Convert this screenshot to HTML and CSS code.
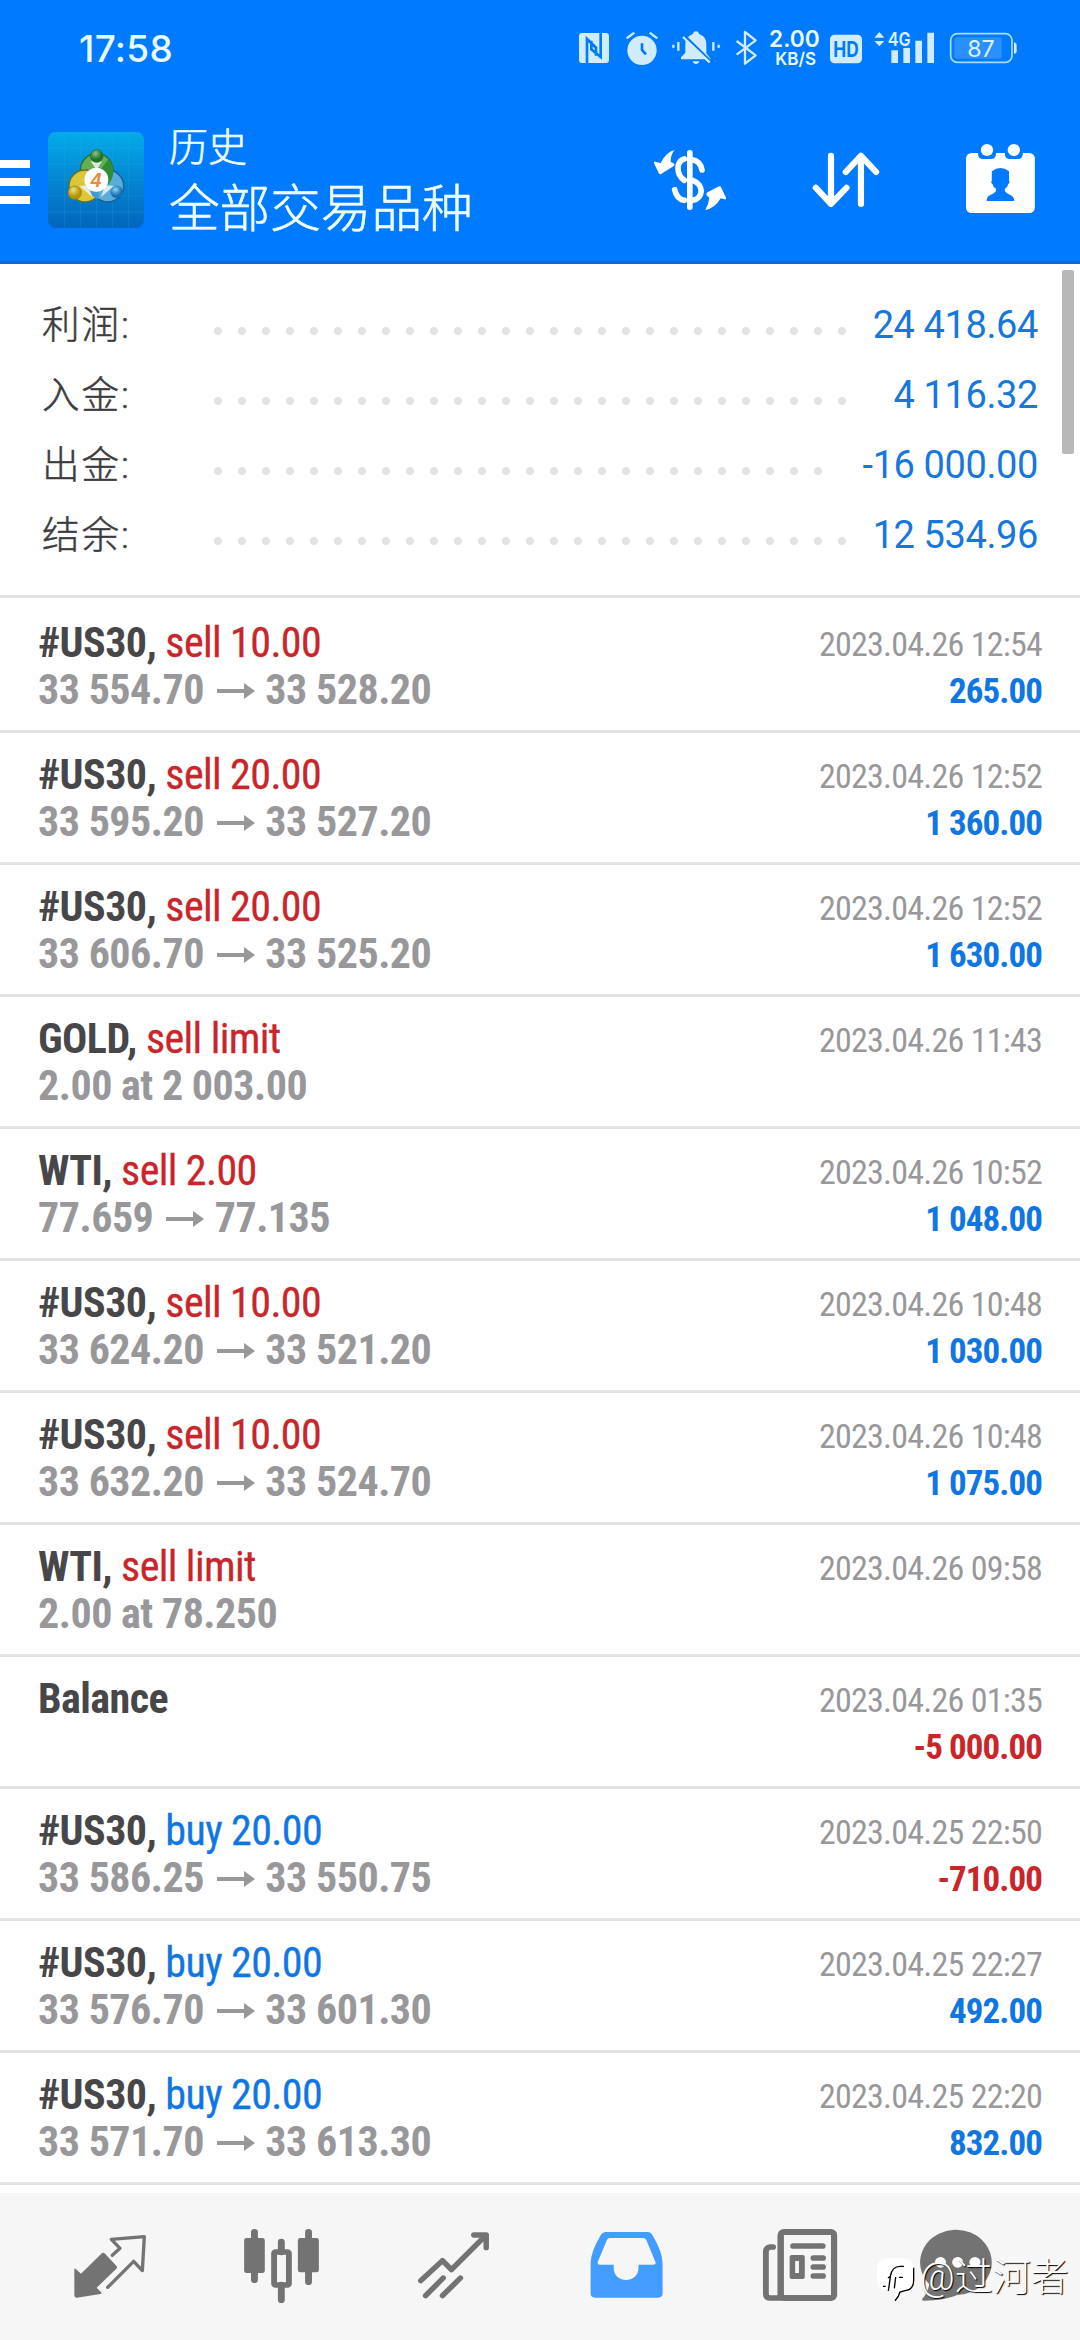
FILE: index.html
```html
<!DOCTYPE html>
<html lang="zh-CN">
<head>
<meta charset="utf-8">
<title>历史</title>
<link rel="stylesheet" href="styles.css">
</head>
<body>
<svg width="0" height="0" class="defs">
  <symbol id="arrow" viewBox="0 0 38 16"><path d="M0 6h27V0l11 8-11 8V10H0z"/></symbol>
</svg>
<div class="screen">
  <header class="header">
    <div class="statusbar">
      <time class="clock">17:58</time>
      <div class="status-icons">
        <svg width="44" height="60" viewBox="39 0 132 180"><rect x="57" y="39" width="90" height="90" rx="9"/><path class="cut" d="M81 129V57l27 26v24M122 39v72L94 88V62"/></svg>
        <svg width="48" height="60" viewBox="171 0 144 180"><circle cx="246" cy="91" r="44"/><path class="line6" d="M200 55l23-17M292 55l-23-17"/><path class="cut" d="M246 70v20l12 13"/></svg>
        <svg width="62" height="60" viewBox="315 0 186 180"><path d="M408 34c6 0 8 3 9 8 16 5 22 17 22 32v26l14 18h-90v-6l13-14V74c0-15 8-27 23-32 1-5 3-8 9-8zM398 124h20c-2 11-18 11-20 0z"/><path class="cut" d="M368 42l86 84"/><path class="line6" d="M369 51l80 76M355 66v26M340 74v9M460 66v26M476 74v9"/></svg>
        <svg width="38" height="60" viewBox="501 0 114 180"><path class="line6" d="M530 63l57 43-32 25V36l32 25-57 43"/></svg>
        <svg width="59" height="60" viewBox="615 0 177 180"><text class="st-bold" x="627" y="82" font-size="69" textLength="152" lengthAdjust="spacingAndGlyphs">2.00</text><text class="st-bold" x="646" y="136" font-size="53" textLength="122" lengthAdjust="spacingAndGlyphs">KB/S</text></svg>
        <svg width="46" height="60" viewBox="792 0 138 180"><rect x="810" y="44" width="96" height="86" rx="14"/><text class="st-cut" x="820" y="111" font-size="64" textLength="76" lengthAdjust="spacingAndGlyphs">HD</text></svg>
        <svg width="73" height="60" viewBox="930 0 219 180"><path d="M943 53l15-17 15 17zM943 63l15 16 15-16z"/><text class="st-med" x="983" y="78" font-size="58" textLength="69" lengthAdjust="spacingAndGlyphs">4G</text><path d="M994 91h20v38h-20zM1030 84h20v45h-20zM1066 62h20v67h-20zM1102 38h20v91h-20z"/></svg>
        <svg width="84" height="60" viewBox="1149 0 252 180"><rect class="line5" x="1172" y="41" width="184" height="86" rx="20"/><rect x="1183" y="52" width="142" height="64" rx="7" opacity=".2"/><path d="M1362 67q8 2 8 8v19q0 6-8 8z"/><text x="1222" y="112" font-size="70" textLength="82" lengthAdjust="spacingAndGlyphs">87</text></svg>
      </div>
    </div>
    <div class="appbar">
      <div class="menu"><i></i><i></i><i></i></div>
      <svg class="logo" viewBox="54 66 288 288">
        <defs>
          <linearGradient id="bg" x1="0" y1="0" x2="0" y2="1"><stop offset="0" stop-color="#04ace8"/><stop offset=".5" stop-color="#0486d2"/><stop offset="1" stop-color="#0365bd"/></linearGradient>
          <radialGradient id="gn" cx=".4" cy=".3"><stop offset="0" stop-color="#8cc47a"/><stop offset="1" stop-color="#1e742c"/></radialGradient>
          <radialGradient id="yl" cx=".4" cy=".3"><stop offset="0" stop-color="#efe07a"/><stop offset="1" stop-color="#b79408"/></radialGradient>
          <radialGradient id="bl" cx=".4" cy=".3"><stop offset="0" stop-color="#8fd0f2"/><stop offset="1" stop-color="#1672b8"/></radialGradient>
        </defs>
        <rect x="54" y="66" width="288" height="288" rx="24" fill="url(#bg)"/>
        <path d="M104 66v288M152 66v288M200 66v288M248 66v288M296 66v288M54 114h288M54 162h288M54 210h288M54 258h288M54 306h288" stroke="#3cb4ea" stroke-width="2" opacity=".3"/>
        <circle cx="200" cy="180" r="49" fill="#64ae55" stroke="#276d2e" stroke-width="4"/>
        <circle cx="165" cy="228" r="48" fill="#dcc63c" stroke="#5f7420" stroke-width="4"/>
        <circle cx="233" cy="228" r="48" fill="#57addc" stroke="#175f90" stroke-width="4"/>
        <path d="M236 146c20 22 18 56-2 78l-34-30z" fill="#2f8d38"/>
        <path d="M206 268c-24-8-38-28-40-48l40 6z" fill="#3f9ad2"/>
        <path d="M182 154l18 26 16-26zM148 228l26-2 14 36zM252 228l-26-2-14 36z" fill="#eef6ea" opacity=".85"/>
        <circle cx="200" cy="138" r="19" fill="url(#gn)" stroke="#276d2e" stroke-width="2"/>
        <circle cx="134" cy="248" r="20" fill="url(#yl)" stroke="#907808" stroke-width="2"/>
        <circle cx="260" cy="246" r="18" fill="url(#bl)" stroke="#175f90" stroke-width="1"/>
        <circle cx="199" cy="209" r="36" fill="#fff"/>
        <text class="logo-num" x="198" y="230" font-size="58" text-anchor="middle">4</text>
      </svg>
      <div class="titles">
        <div class="subtitle">历史</div>
        <div class="title">全部交易品种</div>
      </div>
      <div class="actions">
        <svg width="96" height="96" viewBox="6 6 288 288"><rect x="141" y="60" width="17" height="180" rx="8"/><path class="stroke" stroke-width="17" stroke-linecap="butt" d="M133 87Q114 92 114 115T133 151M158 89Q181 93 186 120M158 151C192 163 192 205 158 211M104 179Q110 208 133 211"/><path d="M104 60Q92 72 92 95l8 5q8 6-2 10l-35 22q-6 3-8-5L42 100q-2-8 6-4l14 3Q78 66 104 60zM196 240Q206 222 208 203l-7-6q-5-7 3-11l30-16q8-4 10 3l14 30q2 8-6 4l-10-2Q224 236 196 240z"/></svg>
        <svg width="96" height="96" viewBox="749.2 396 278.8 288" preserveAspectRatio="none"><path class="stroke" stroke-width="18" d="M845 467V611M801 563l44 49 45-49M932 612V468M888 516l44-49 44 49"/></svg>
        <svg width="96" height="96" viewBox="1196.4 396 278.8 288" preserveAspectRatio="none"><rect x="1237" y="459" width="200" height="180" rx="16"/><path class="blue" d="M1272 452h52v10q0 15-15 15h-22q-15 0-15-15zM1350 452h52v10q0 15-15 15h-22q-15 0-15-15z"/><circle cx="1298" cy="450" r="18"/><circle cx="1376" cy="450" r="18"/><path class="blue" d="M1312 514q25-20 50 0v28q4 4-2 10-2 10-10 14v8q5 6 16 11 11 5 11 18h-80q0-13 11-18 11-5 16-11v-8q-8-4-10-14-6-6-2-10z"/></svg>
      </div>
    </div>
  </header>

  <main class="content">
    <section class="summary">
      <div class="sum-row"><span class="sum-label">利润:</span><span class="dots"></span><span class="sum-value">24 418.64</span></div>
      <div class="sum-row"><span class="sum-label">入金:</span><span class="dots"></span><span class="sum-value">4 116.32</span></div>
      <div class="sum-row"><span class="sum-label">出金:</span><span class="dots short"></span><span class="sum-value">-16 000.00</span></div>
      <div class="sum-row"><span class="sum-label">结余:</span><span class="dots"></span><span class="sum-value">12 534.96</span></div>
    </section>

    <section class="deals">
      <article class="deal"><div class="left"><div class="name">#US30, <span class="sell">sell 10.00</span></div><div class="price">33 554.70 <svg class="arrow"><use href="#arrow"/></svg> 33 528.20</div></div><div class="right"><div class="date">2023.04.26 12:54</div><div class="profit">265.00</div></div></article>
      <article class="deal"><div class="left"><div class="name">#US30, <span class="sell">sell 20.00</span></div><div class="price">33 595.20 <svg class="arrow"><use href="#arrow"/></svg> 33 527.20</div></div><div class="right"><div class="date">2023.04.26 12:52</div><div class="profit">1 360.00</div></div></article>
      <article class="deal"><div class="left"><div class="name">#US30, <span class="sell">sell 20.00</span></div><div class="price">33 606.70 <svg class="arrow"><use href="#arrow"/></svg> 33 525.20</div></div><div class="right"><div class="date">2023.04.26 12:52</div><div class="profit">1 630.00</div></div></article>
      <article class="deal"><div class="left"><div class="name">GOLD, <span class="sell">sell limit</span></div><div class="price">2.00 at 2 003.00</div></div><div class="right"><div class="date">2023.04.26 11:43</div></div></article>
      <article class="deal"><div class="left"><div class="name">WTI, <span class="sell">sell 2.00</span></div><div class="price">77.659 <svg class="arrow"><use href="#arrow"/></svg> 77.135</div></div><div class="right"><div class="date">2023.04.26 10:52</div><div class="profit">1 048.00</div></div></article>
      <article class="deal"><div class="left"><div class="name">#US30, <span class="sell">sell 10.00</span></div><div class="price">33 624.20 <svg class="arrow"><use href="#arrow"/></svg> 33 521.20</div></div><div class="right"><div class="date">2023.04.26 10:48</div><div class="profit">1 030.00</div></div></article>
      <article class="deal"><div class="left"><div class="name">#US30, <span class="sell">sell 10.00</span></div><div class="price">33 632.20 <svg class="arrow"><use href="#arrow"/></svg> 33 524.70</div></div><div class="right"><div class="date">2023.04.26 10:48</div><div class="profit">1 075.00</div></div></article>
      <article class="deal"><div class="left"><div class="name">WTI, <span class="sell">sell limit</span></div><div class="price">2.00 at 78.250</div></div><div class="right"><div class="date">2023.04.26 09:58</div></div></article>
      <article class="deal"><div class="left"><div class="name">Balance</div></div><div class="right"><div class="date">2023.04.26 01:35</div><div class="profit loss">-5 000.00</div></div></article>
      <article class="deal"><div class="left"><div class="name">#US30, <span class="buy">buy 20.00</span></div><div class="price">33 586.25 <svg class="arrow"><use href="#arrow"/></svg> 33 550.75</div></div><div class="right"><div class="date">2023.04.25 22:50</div><div class="profit loss">-710.00</div></div></article>
      <article class="deal"><div class="left"><div class="name">#US30, <span class="buy">buy 20.00</span></div><div class="price">33 576.70 <svg class="arrow"><use href="#arrow"/></svg> 33 601.30</div></div><div class="right"><div class="date">2023.04.25 22:27</div><div class="profit">492.00</div></div></article>
      <article class="deal"><div class="left"><div class="name">#US30, <span class="buy">buy 20.00</span></div><div class="price">33 571.70 <svg class="arrow"><use href="#arrow"/></svg> 33 613.30</div></div><div class="right"><div class="date">2023.04.25 22:20</div><div class="profit">832.00</div></div></article>
    </section>
    <div class="scrollbar"></div>
  </main>

  <nav class="nav">
    <svg viewBox="0 -9 360 360"><path d="M73 179q0-6 5-1l15 13 61-60q6-5 11 0l34 36q4 5 0 9l-59 57 12 12q5 6-1 7l-70 11q-8 1-8-7z"/><path class="stroke" stroke-width="10" stroke-linejoin="miter" stroke-linecap="butt" d="M187 136l23-21-26-27 99-8-6 102-26-28-78 78"/></svg>
    <svg viewBox="644.7 111 348.5 360" preserveAspectRatio="none"><rect x="709" y="204" width="60" height="105" rx="7"/><rect x="865" y="204" width="61" height="103" rx="7"/><path class="stroke" stroke-width="20" d="M739 187v142M896 187v148M817 216v30M817 345v44"/><rect class="stroke" stroke-width="17" x="796" y="246" width="43" height="99" rx="4"/></svg>
    <svg viewBox="1144.2 111 348.5 360" preserveAspectRatio="none"><path class="stroke" stroke-width="16" d="M1222 332l63-60 26 27 99-102M1376 195h36v38M1236 377l51-53M1285 377l52-53"/></svg>
    <svg class="active" viewBox="75.5 111 348.5 360" preserveAspectRatio="none"><path fill-rule="evenodd" d="M190 186h124q8 0 12 8 30 52 30 86v90q0 13-13 13H160q-13 0-13-13v-90q0-34 30-86 5-8 13-8zM204 204q-7 0-10 7l-26 64q-3 9 6 9h40v10c0 48 72 48 72 0v-10h42q11 0 7-9l-26-64q-3-7-10-7z"/></svg>
    <svg viewBox="575 111 348.5 360" preserveAspectRatio="none"><rect class="stroke" stroke-width="18" x="699" y="186" width="155" height="198" rx="9"/><path class="stroke" stroke-width="17" stroke-linecap="butt" d="M677 231h-8q-13 2-13 14v126q0 13 13 13h30M699 200v184"/><path class="stroke" stroke-width="17" d="M735 228h86M794 264h28M794 291h28M794 318h28"/><path fill-rule="evenodd" d="M731 255h32q6 0 6 6v60q0 6-6 6h-32q-6 0-6-6v-60q0-6 6-6zM741 273v36h11v-36z"/></svg>
    <svg viewBox="1074.5 111 348.5 360" preserveAspectRatio="none"><path d="M1110 387q18-22 20-45a104 98 0 1 1 82 33q-38 17-97 17-7 0-5-5z"/><g fill="#fff"><circle cx="1163" cy="277" r="16"/><circle cx="1213" cy="277" r="16"/><circle cx="1263" cy="277" r="16"/></g></svg>
    <div class="watermark">
      <svg width="38" height="46" viewBox="50 118 114 138"><path d="M86 122h42q33 0 33 34v30q0 32-28 34l-14 4q-4 12-13 18v-16l-4-8-6-2-12 2-22-6q-12-10-12-30v-26q0-34 36-34z" fill="#fff"/><path d="M160 150v38q0 28-26 31l-15 4q-4 15-15 26" fill="none" stroke="#000" stroke-width="4"/><path d="M131 146h-12q-24 0-29 30l-7 5M90 178l-6 42M68 206l8 0M116 179h12M106 178l-4 34" fill="none" stroke="#000" stroke-width="4"/></svg>
      <span>@过河者</span>
    </div>
  </nav>
</div>
</body>
</html>
```
FILE: styles.css
```css
* { box-sizing: border-box; }
body {
  margin: 0;
  background: #fff;
  font-family: Roboto, "Noto Sans CJK SC", sans-serif;
}
svg { display: block; flex: none; }
.defs { position: absolute; }
.screen { width: 1080px; height: 2340px; display: flex; flex-direction: column; overflow: hidden; }

.header { height: 264px; background: #007aff; border-bottom: 3px solid #1268d8; color: #fff; flex: none; }
.statusbar { height: 96px; padding: 20px 53px 0 79px; display: flex; justify-content: space-between; }
.clock { font: 500 37px/57px Inter, sans-serif; letter-spacing: 0.3px; color: #e8fbff; }
.status-icons { display: flex; fill: #d2ecff; font-family: Inter, sans-serif; }
.status-icons text { fill: #d8f2ff; }
.status-icons .st-bold { font-weight: 600; fill: #e8fbff; }
.status-icons .st-med { font-weight: 600; }
.status-icons .st-cut { font-weight: 700; fill: #007aff; }
.cut { fill: none; stroke: #007aff; stroke-width: 8; }
.line6 { fill: none; stroke: #d2ecff; stroke-width: 7; stroke-linejoin: round; }
.line5 { fill: none; stroke: #a8dcff; stroke-width: 5; }

.appbar { display: flex; height: 165px; padding: 0 32px 0 0; }
.menu { width: 30px; margin-right: 18px; padding-top: 64px; display: flex; flex-direction: column; gap: 10px; }
.menu i { height: 8px; background: #fff; }
.logo { width: 96px; height: 96px; margin-top: 36px; }
.logo-num { font-family: "Liberation Sans", sans-serif; font-style: italic; font-weight: 700; fill: #ec8a3a; }
.titles { flex: 1; padding: 23px 0 0 25px; font-weight: 300; color: #f0fdff; -webkit-text-stroke: 0.6px #f0fdff; }
.subtitle { font-size: 39px; line-height: 58px; }
.title { margin-top: 2px; font-size: 50.6px; line-height: 62px; white-space: nowrap; }
.actions { display: flex; gap: 58px; padding-top: 36px; fill: #fff; stroke: none; }
.actions svg:first-child { margin-right: 2px; }
.actions .stroke { stroke: #fff; }
.stroke { fill: none; stroke-linecap: round; stroke-linejoin: round; }
.blue { fill: #007aff; }

.content { position: relative; flex: 1; overflow: hidden; }
.summary { height: 334px; padding: 26px 42px 0; border-bottom: 3px solid #e3e3e3; }
.sum-row { display: flex; align-items: center; height: 70px; line-height: 70px; }
.sum-label { width: 164px; font-size: 37.5px; font-weight: 300; color: #3c3c3f; letter-spacing: 2px; -webkit-text-stroke: 0.5px #3c3c3f; }
.dots {
  width: 648px;
  height: 24px;
  margin-top: 11px;
  background: radial-gradient(circle at 12px 12px, #e3e3e3 3.6px, transparent 4.4px) 0 0 / 24px 24px repeat-x;
}
.dots.short { width: 624px; }
.sum-value { margin-left: auto; font-size: 38px; letter-spacing: -0.4px; color: #1677dc; white-space: pre; }

.deals { font-family: "Roboto Condensed", Roboto, sans-serif; }
.deal { display: flex; justify-content: space-between; height: 132px; padding: 18px 38px 0; border-bottom: 3px solid #e3e3e3; line-height: 47px; white-space: nowrap; }
.deal:first-child { height: 135px; padding-top: 21px; }
.name { font-size: 42px; font-weight: 700; color: #47474a; letter-spacing: -0.55px; }
.name span { font-weight: 400; letter-spacing: -0.6px; -webkit-text-stroke: 0.3px; }
.sell { color: #c9252a; }
.buy { color: #1077e2; }
.price { display: flex; font-size: 42px; font-weight: 700; color: #98989b; white-space: pre; align-items: center; letter-spacing: -0.5px; }
.arrow { width: 38px; height: 16px; margin: 2px 1.5px 0 3.5px; fill: #98989b; }
.right { padding-top: 2px; text-align: right; }
.date { font-size: 34px; letter-spacing: -0.75px; color: #98989b; }
.profit { font-size: 35px; font-weight: 700; letter-spacing: -0.95px; color: #1077e2; }
.loss { color: #c9252a; }
.scrollbar { position: absolute; top: 6px; right: 6px; width: 12px; height: 184px; border-radius: 2px; background: #b8b8b8; }

.nav { position: relative; display: flex; gap: 52px; height: 147px; flex: none; padding: 14px 0 0 50px; background: #f6f6f6; fill: #737373; }
.nav > svg { width: 120px; height: 120px; }
.nav .stroke { stroke: #737373; fill: none; }
.nav .active { fill: #439dff; }
.watermark { position: absolute; left: 877px; top: 64px; display: flex; align-items: center; gap: 5px; color: #fff; font-size: 38px; line-height: 46px; font-weight: 300; text-shadow: 1px 1px 1px #000; white-space: nowrap; }
.watermark span { margin-top: -6px; }
```
